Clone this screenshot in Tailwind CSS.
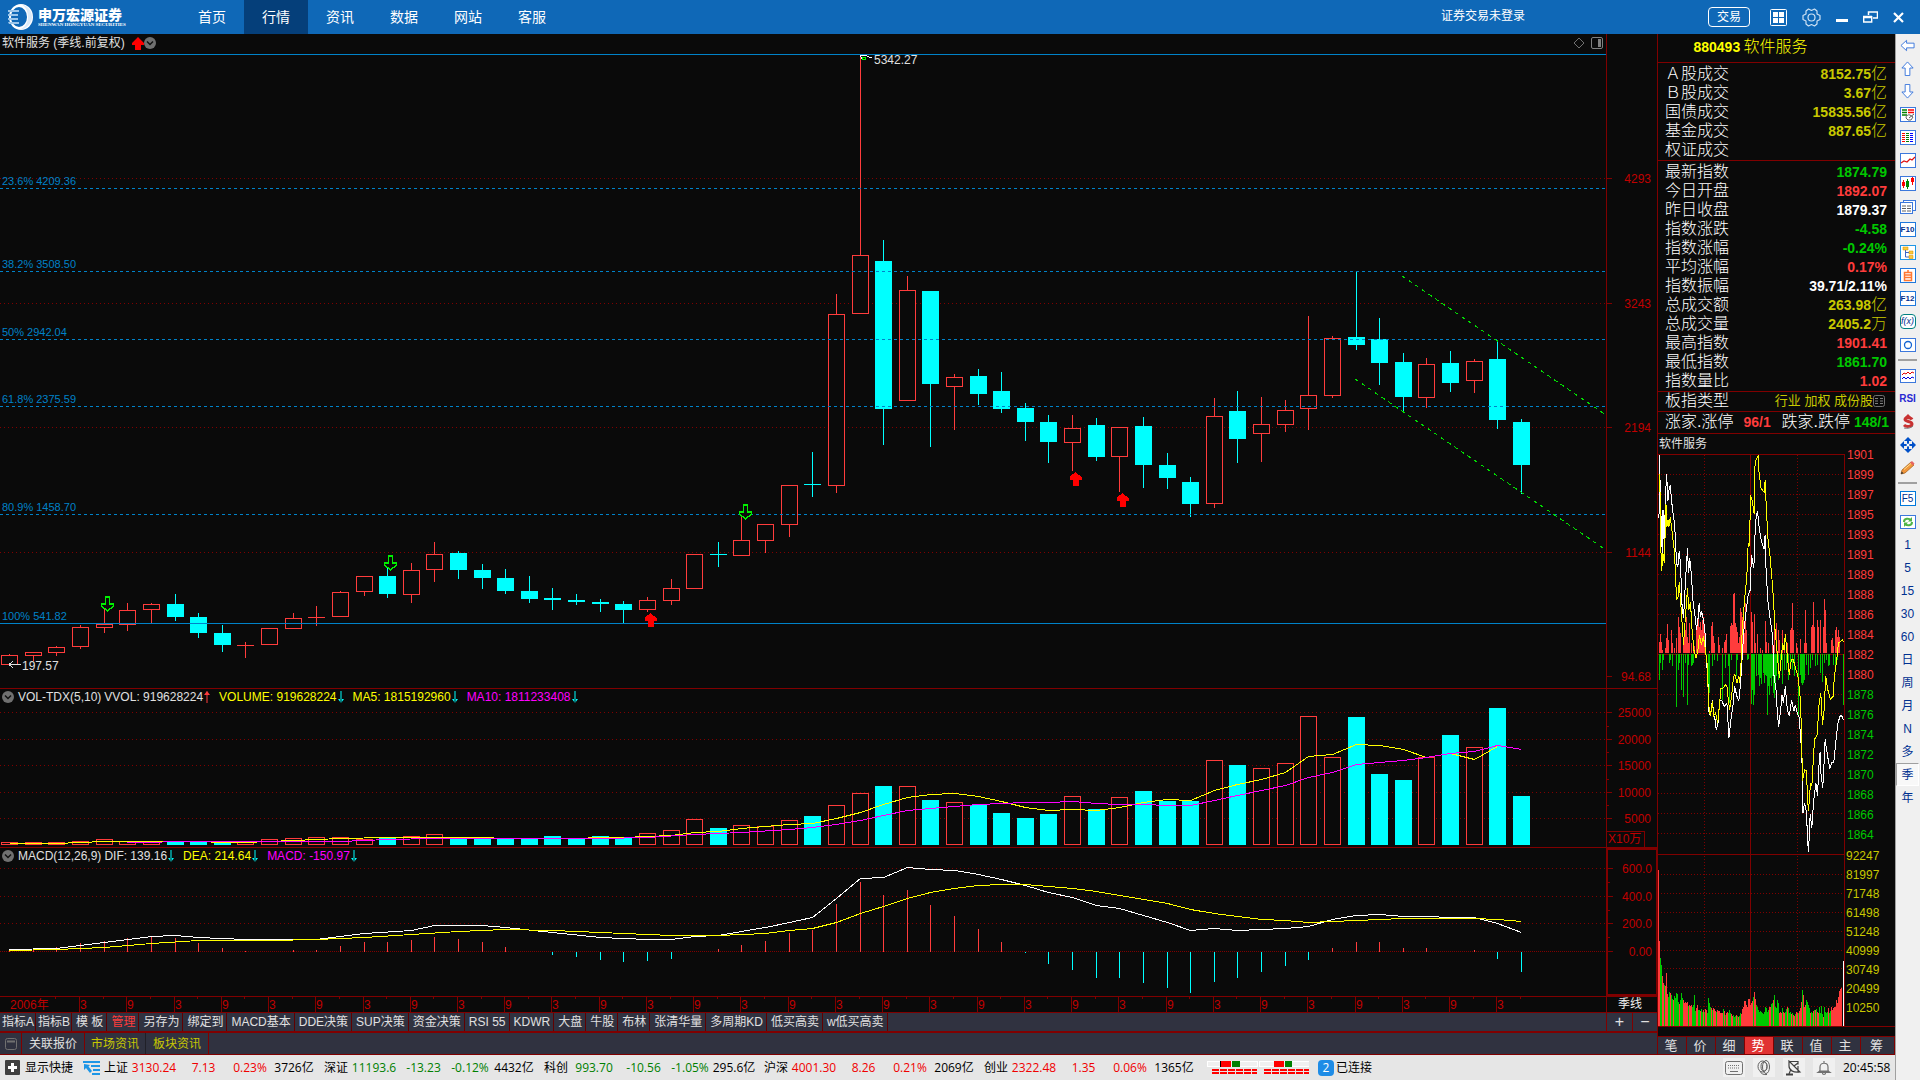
<!DOCTYPE html>
<html lang="zh-CN">
<head>
<meta charset="UTF-8">
<meta name="viewport" content="width=device-width, initial-scale=1.0">
<title>软件服务 880493</title>
<script src="https://cdn.jsdelivr.net/npm/@tailwindcss/browser@4"></script>
</head>
<body class="h-screen overflow-hidden flex flex-col bg-[#0a0a0a] text-[#e0e0e0] text-xs font-[family-name:'Liberation_Sans','Noto_Sans_CJK_SC',sans-serif]">

<!-- Title bar -->
<header class="h-[34px] shrink-0 flex items-center bg-[#0f68b7] text-white">
    <div class="w-[180px] flex items-center pl-2 gap-1">
        <svg class="w-[26px] h-7" viewBox="0 0 26 28">
            <ellipse cx="13" cy="14" rx="12" ry="13" fill="#fff"/>
            <ellipse cx="11" cy="14" rx="8" ry="10" fill="#0f68b7"/>
            <path d="M0 7h11v2H0zM0 11h10v2H0zM0 15h10v2H0zM0 19h11v2H1z" fill="#9cc6ea"/>
            <path d="M13 1c8 2 11 8 11 13S20 26 11 27c7-3 9-8 9-13S18 4 13 1z" fill="#dcebf8"/>
        </svg>
        <svg class="w-[92px] h-6" viewBox="0 0 92 24" role="img" aria-label="申万宏源证券">
            <text x="0" y="15" font-size="14" font-weight="900" fill="#fff">申万宏源证券</text>
            <text x="0" y="21" font-size="5" font-weight="700" font-family="Liberation Serif, serif" fill="#fff">SHENWAN HONGYUAN SECURITIES</text>
        </svg>
    </div>
    <nav class="flex h-full text-sm">
        <button class="w-16">首页</button>
        <button class="w-16 bg-[#053f7a]">行情</button>
        <button class="w-16">资讯</button>
        <button class="w-16">数据</button>
        <button class="w-16">网站</button>
        <button class="w-16">客服</button>
    </nav>
    <span class="ml-auto mr-[183px] pb-0.5">证券交易未登录</span>
    <div class="flex items-center gap-[15px] pr-4">
        <button class="w-[42px] h-5 mr-[5px] rounded border border-white leading-4">交易</button>
        <button aria-label="布局"><svg class="w-[17px] h-[17px]" viewBox="0 0 17 17"><rect x=".5" y=".5" width="16" height="16" rx="1" fill="none" stroke="#fff"/><path d="M3 3h5v5H3zM9 3h5v5H9zM3 9h5v5H3zM9 9h5v5H9z" fill="#fff"/></svg></button>
        <button aria-label="设置"><svg class="w-[19px] h-[19px]" viewBox="0 0 19 19" fill="none" stroke="#cfe2f4" stroke-width="1.2"><path d="M6.500 1 9.500 2.500 12.500 1l2.500 2v3l3 1.500v4L15 13v3l-2.500 2-3-1.500-3 1.500L4 16v-3l-3-1.500v-4L4 6V3z" stroke-linejoin="round"/><circle cx="9.500" cy="9.500" r="3.500"/></svg></button>
        <button aria-label="最小化"><svg class="w-3 h-[17px]" viewBox="0 0 12 17"><path d="M0 10h12v3H0z" fill="#fff"/></svg></button>
        <button aria-label="还原"><svg class="w-[15px] h-3" viewBox="0 0 15 12" fill="none" stroke="#fff"><path d="M5.500 4V1h9v6H10" stroke-width="1.500"/><path d="M0 6h9" stroke-width="2.500"/><path d="M.7 5v6h8V5" stroke-width="1.400"/></svg></button>
        <button aria-label="关闭"><svg class="w-[11px] h-[11px]" viewBox="0 0 11 11"><path d="M1 1l9 9M10 1l-9 9" stroke="#fff" stroke-width="2.200"/></svg></button>
    </div>
</header>

<div class="flex-1 min-h-0 flex">
    <div class="flex-1 min-w-0 flex flex-col">
        <div class="flex-1 min-h-0 flex">

            <!-- Charts -->
            <main class="flex-1 min-w-0 flex flex-col">
                <section class="flex-1 min-h-0 flex border-b border-[#800000]">
                    <div class="flex-1 min-w-0 relative">
                        <svg id="price" class="w-full h-full block"></svg>
                        <div class="absolute inset-x-0 top-0 h-[18px] flex items-center pl-0.5">
                            <h1>软件服务 (季线.前复权)</h1>
                            <svg class="w-3 h-[13px] ml-[7px]" viewBox="0 0 12 13"><path d="M6 0l6 6v2H9v5H3V8H0V6z" fill="#f00"/></svg>
                            <svg class="w-3 h-3" viewBox="0 0 12 12"><circle cx="6" cy="6" r="6" fill="#707070"/><path d="M3 4.500l3 3 3-3" stroke="#111" stroke-width="1.500" fill="none"/></svg>
                            <svg class="w-3 h-3 ml-auto" viewBox="0 0 12 12"><path d="M6 1l5 5-5 5-5-5z" fill="none" stroke="#707070"/></svg>
                            <svg class="w-3 h-3 ml-1.5 mr-[3px]" viewBox="0 0 12 12"><rect x=".5" y=".5" width="11" height="11" rx="1.500" fill="none" stroke="#808080"/><path d="M7 2h3v8H7z" fill="#808080"/></svg>
                        </div>
                    </div>
                    <svg id="priceAxis" class="w-[51px] h-full block border-l border-[#800000]"></svg>
                </section>
                <section class="h-[159px] flex border-b border-[#800000]">
                    <div class="flex-1 min-w-0 relative">
                        <svg id="vol" class="w-full h-full block"></svg>
                        <div class="absolute inset-x-0 top-0 h-4 flex items-center pl-0.5">
                            <svg class="w-3 h-3 mr-1" viewBox="0 0 12 12"><circle cx="6" cy="6" r="6" fill="#707070"/><path d="M3 4.500l3 3 3-3" stroke="#111" stroke-width="1.500" fill="none"/></svg>
                            <span class="mr-[3px]">VOL-TDX(5,10)</span>
                            <span>VVOL: 919628224</span>
                            <svg class="w-2 h-3 mr-2" viewBox="0 0 8 12"><path d="M3.500 0h1v12h-1zM4 0l3 4H1z" fill="#ff3c3c"/></svg>
                            <span class="text-[#ffff00]">VOLUME: 919628224</span>
                            <svg class="w-2 h-3 mr-2" viewBox="0 0 8 12"><path d="M3.500 0h1v12h-1zM4 12l3-4H1z" fill="#0ff"/></svg>
                            <span class="text-[#ffff00]">MA5: 1815192960</span>
                            <svg class="w-2 h-3 mr-2" viewBox="0 0 8 12"><path d="M3.500 0h1v12h-1zM4 12l3-4H1z" fill="#0ff"/></svg>
                            <span class="text-[#ff00ff]">MA10: 1811233408</span>
                            <svg class="w-2 h-3" viewBox="0 0 8 12"><path d="M3.500 0h1v12h-1zM4 12l3-4H1z" fill="#0ff"/></svg>
                        </div>
                    </div>
                    <div class="w-[51px] relative border-l border-[#800000]">
                        <svg id="volAxis" class="w-full h-full block"></svg>
                        <span class="absolute left-0 bottom-0 w-[38px] h-4 leading-[15px] pl-px border-t border-r border-[#800000] text-[#c00000]">X10万</span>
                    </div>
                </section>
                <section class="h-[149px] flex border-b border-[#800000]">
                    <div class="flex-1 min-w-0 relative">
                        <svg id="macd" class="w-full h-full block"></svg>
                        <div class="absolute inset-x-0 top-0 h-4 flex items-center pl-0.5">
                            <svg class="w-3 h-3 mr-1" viewBox="0 0 12 12"><circle cx="6" cy="6" r="6" fill="#707070"/><path d="M3 4.500l3 3 3-3" stroke="#111" stroke-width="1.500" fill="none"/></svg>
                            <span class="mr-[3px]">MACD(12,26,9)</span>
                            <span>DIF: 139.16</span>
                            <svg class="w-2 h-3 mr-2" viewBox="0 0 8 12"><path d="M3.500 0h1v12h-1zM4 12l3-4H1z" fill="#0ff"/></svg>
                            <span class="text-[#ffff00]">DEA: 214.64</span>
                            <svg class="w-2 h-3 mr-2" viewBox="0 0 8 12"><path d="M3.500 0h1v12h-1zM4 12l3-4H1z" fill="#0ff"/></svg>
                            <span class="text-[#ff00ff]">MACD: -150.97</span>
                            <svg class="w-2 h-3" viewBox="0 0 8 12"><path d="M3.500 0h1v12h-1zM4 12l3-4H1z" fill="#0ff"/></svg>
                        </div>
                    </div>
                    <svg id="macdAxis" class="w-[51px] h-full block border-2 border-r border-[#800000]"></svg>
                </section>
                <div class="h-4 flex border-b border-[#800000]">
                    <svg id="time" class="flex-1 min-w-0 h-full block"></svg>
                    <div class="w-[51px] pr-1 border-l border-[#800000] text-center leading-[15px] text-[#f0f0f0]">季线</div>
                </div>
                <div class="h-5 flex border-b-2 border-[#800000] bg-[#303240] leading-[17px] whitespace-nowrap">
                    <div id="indicators" class="flex-1 flex"></div>
                    <button class="w-[26px] border-l border-[#800000] text-base leading-4">+</button>
                    <button class="w-[25px] border-l border-[#800000] text-base leading-4">−</button>
                </div>
                <div class="h-[22px] flex border-b border-[#800000] bg-[#303240] leading-5">
                    <button class="w-[22px] flex items-center justify-center border-r border-[#800000]" aria-label="展开"><svg class="w-3 h-3" viewBox="0 0 12 12"><rect x=".5" y=".5" width="11" height="11" rx="2" fill="none" stroke="#707070"/><path d="M2 2.500h8v2H2z" fill="#707070"/></svg></button>
                    <button class="px-[7px] border-r border-[#800000]">关联报价</button>
                    <button class="px-1.5 border-r border-[#202028] text-[#c8c800]">市场资讯</button>
                    <button class="px-[7px] border-r border-[#800000] text-[#c8c800]">板块资讯</button>
                </div>
            </main>

            <!-- Quote panel -->
            <aside class="w-[238px] shrink-0 flex flex-col border-l border-[#800000]">
                <h2 class="h-[29px] shrink-0 border-b border-[#800000] text-center leading-7 text-[#ffff00] pr-14 pl-1"><b class="text-sm font-bold">880493</b> <span class="text-base font-light">软件服务</span></h2>
                <dl id="turnover" class="shrink-0 pt-px pb-px pl-[7px] pr-2 border-b border-[#800000]"></dl>
                <dl id="index" class="shrink-0 pt-px pb-px pl-[7px] pr-2 border-b border-[#800000]"></dl>
                <div class="h-5 shrink-0 flex items-center pl-[7px] pr-[10px] pb-0.5 border-b border-[#800000]">
                    <span class="text-base font-light leading-[18px] flex-1 text-white">板指类型</span>
                    <a href="#" class="text-[13px] text-[#c8c800]">行业 加权 成份股</a>
                    <svg class="w-3 h-3" viewBox="0 0 12 12"><rect x=".5" y=".5" width="11" height="11" rx="2" fill="none" stroke="#707070"/><path d="M2 3.500h3M7 3.500h3M2 6h3M7 6h3M2 8.500h3M7 8.500h3" stroke="#808080"/></svg>
                </div>
                <div class="h-[22px] shrink-0 flex items-center pl-[7px] pr-1.5 pb-0.5 border-b border-[#800000] text-base font-light leading-5 text-white">
                    <span>涨家.涨停</span><b class="ml-[10px] text-sm font-bold text-[#ff3c3c]">96/1</b>
                    <span class="ml-auto mr-1">跌家.跌停</span><b class="text-sm font-bold text-[#00c800]">148/1</b>
                </div>
                <div class="h-5 shrink-0 pl-px leading-5">软件服务</div>
                <div class="flex-1 min-h-0 flex border-b border-[#800000]">
                    <div class="w-[187px] shrink-0 flex flex-col border-t border-r border-[#800000]">
                        <svg id="tick" class="w-full flex-[402] min-h-0 block" viewBox="54 74 561 1205" preserveAspectRatio="none"></svg>
                        <svg id="tickVol" class="w-full flex-[171] min-h-0 block" viewBox="174 106 561 513" preserveAspectRatio="none"></svg>
                    </div>
                    <svg id="tickAxis" class="flex-1 min-w-0 h-full block overflow-visible"></svg>
                </div>
                <div class="h-[28px] shrink-0 pt-[9px]">
                    <div id="tabs" class="h-[19px] flex border-y border-[#800000] bg-[#303240] text-[13px] leading-[17px]"></div>
                </div>
            </aside>
        </div>

        <!-- Status bar -->
        <footer class="h-[25px] shrink-0 flex items-center bg-[#e6e6e6] text-black whitespace-nowrap font-[family-name:'Open_Sans','Noto_Sans_CJK_SC',sans-serif]">
            <button class="flex items-center gap-[5px] pl-[5px]">
                <svg class="w-[15px] h-[15px]" viewBox="0 0 15 15"><rect width="15" height="15" rx="1" fill="#404040"/><path d="M6 3h3v3h3v3H9v3H6V9H3V6h3z" fill="#fff"/></svg>
                显示快捷
            </button>
            <svg class="w-[17px] h-[14px] ml-[10px] mr-1" viewBox="0 0 17 14"><path d="M0 0h17v2H0zM8 4h9v2H8zM10 8h7v2h-7zM9 12h8v2H9zM1 3l6 1-1.500 1.500L9 10l-2 2-4-5-2 2z" fill="#1e96e6"/></svg>
            <div id="quotes" class="flex"></div>
            <svg class="w-[102px] h-[15px] ml-[3px]" viewBox="0 0 102 15" shape-rendering="crispEdges">
                <path d="M0 1h50v5H0zM52 1h50v5H52z" fill="#f0f0f0" stroke="#fff"/>
                <path d="M14 1h10v6H14zM67 1h10v6H67z" fill="#f00"/><path d="M25 1h8v6h-8zM78 1h7v6h-7z" fill="#008000"/><path d="M13 1h1v6h-1z" fill="#000"/>
                <path d="M5 10h45M57 10h45M5 13h45M57 13h45" stroke="#f00" stroke-width="2" stroke-dasharray="7 1"/>
            </svg>
            <span class="w-4 h-4 ml-[9px] mr-0.5 rounded-sm bg-[#1e8ce6] text-white text-center leading-4">2</span>已连接
            <div class="ml-auto flex items-center gap-2 pr-[3px]">
                <button class="w-[22px] h-[19px] flex items-center justify-center bg-[#f0f0f0]" aria-label="键盘"><svg class="w-[18px] h-[14px]" viewBox="0 0 18 14" fill="none" stroke="#707070"><rect x=".5" y=".5" width="17" height="13" rx="2"/><path d="M3 4.500h12M3 7h12" stroke-dasharray="1 1"/><path d="M5 10.500h8"/></svg></button>
                <button class="w-[22px] h-[19px] flex items-center justify-center bg-[#f0f0f0]" aria-label="耳机"><svg class="w-4 h-4" viewBox="0 0 16 16" fill="none" stroke="#606060"><ellipse cx="6.500" cy="6.500" rx="4.500" ry="5.500"/><ellipse cx="8" cy="6.500" rx="3" ry="4.500"/><ellipse cx="10" cy="7" rx="3.500" ry="6.500"/><path d="M4 11c1 3 4 4 7 3.500"/></svg></button>
                <button class="w-[22px] h-[19px] flex items-center justify-center bg-[#f0f0f0]" aria-label="卫星"><svg class="w-4 h-4" viewBox="0 0 16 16" fill="none" stroke="#404040" stroke-width="1.200"><path d="M3 1v5c0 4 4 7 11 6L3 1zM4 1.500h8v3M8 6l4-3M12 12V6M5 9l-2 5"/><path d="M0 14.500h7" stroke-width="2"/></svg></button>
                <button class="w-[22px] h-[19px] flex items-center justify-center bg-[#f0f0f0]" aria-label="提醒"><svg class="w-4 h-4" viewBox="0 0 16 16" fill="none" stroke="#707070" stroke-width="1.200"><path d="M8 1v2M4 11V7c0-5 8-5 8 0v4l2 1.500H2zM6.500 13c0 2 3 2 3 0"/><path d="M3 11.500h10" stroke-width="2"/></svg></button>
                <time class="w-[49px]">20:45:58</time>
            </div>
        </footer>
    </div>

    <!-- Tool strip -->
    <nav class="w-[25px] shrink-0 flex flex-col items-stretch bg-[#f0f0f0] border-l border-[#a0a0a0] text-[#003090] pr-px pb-2" id="tools">
        <button class="h-[23px] grid place-items-center" aria-label="后退"><svg width="15" height="15" viewBox="0 0 16 16" fill="#fff" stroke="#3c78dc"><path d="M1 8l6-5.500V5.500h8v5H7v3z"/></svg></button>
        <button class="h-[23px] grid place-items-center" aria-label="上"><svg width="15" height="15" viewBox="0 0 16 16" fill="#fff" stroke="#3c78dc"><path d="M8 1L2 7.500h3.500v8h5v-8H14z"/></svg></button>
        <button class="h-[23px] grid place-items-center" aria-label="下"><svg width="15" height="15" viewBox="0 0 16 16" fill="#fff" stroke="#3c78dc"><path d="M8 15L2 8.500h3.500v-8h5v8H14z"/></svg></button>
        <button class="h-[23px] grid place-items-center"><svg width="16" height="16" viewBox="0 0 16 16" fill="none"><rect x=".5" y=".5" width="15" height="14" fill="#fff" stroke="#3c78dc"/><path d="M2 3h5M2 5.500h5M2 8h5" stroke="#008000" stroke-width="1.500"/><path d="M8 3h6M8 5.500h6" stroke="#f00" stroke-width="1.500"/><path d="M6 11a3 3 0 0 1 4-3l3 2-2 3H8zM9 11l5-4" stroke="#606060"/></svg></button>
        <button class="h-[23px] grid place-items-center"><svg width="16" height="16" viewBox="0 0 16 16" fill="none" shape-rendering="crispEdges"><rect x=".5" y=".5" width="15" height="14" fill="#fff" stroke="#3c78dc"/><path d="M3.500 3v10" stroke="#f00" stroke-width="3" stroke-dasharray="1 1"/><path d="M7.500 3v10" stroke="#008000" stroke-width="3" stroke-dasharray="1 1"/><path d="M11.500 3v10" stroke="#00f" stroke-width="3" stroke-dasharray="1 1"/></svg></button>
        <button class="h-[23px] grid place-items-center"><svg width="16" height="16" viewBox="0 0 16 16" fill="none"><rect x=".5" y=".5" width="15" height="14" fill="#fff" stroke="#3c78dc"/><path d="M1 10l3-2 3 1 3-3 2 1 3-3" stroke="#e01010" stroke-width="1.200"/></svg></button>
        <button class="h-[23px] grid place-items-center"><svg width="16" height="16" viewBox="0 0 16 16" fill="none"><rect x=".5" y=".5" width="15" height="14" fill="#fff" stroke="#3c78dc"/><path d="M2 6h3v4H2zM3 4h1v8H3zM11 2h3v4h-3zM12 1h1v8h-1z" fill="#f00"/><path d="M6 5h3v6H6zM7 3h1v10H7z" fill="#080"/></svg></button>
        <button class="h-[23px] grid place-items-center"><svg width="16" height="14" viewBox="0 0 16 14"><rect x="3.500" y=".5" width="12" height="10" fill="#fff" stroke="#3c78dc"/><rect x=".5" y="2.500" width="12" height="11" fill="#fff" stroke="#3c78dc"/><path d="M2 6h4M7 6h4M2 8.500h4M7 8.500h4M2 11h4M7 11h4" stroke="#606060"/></svg></button>
        <button class="h-[23px] grid place-items-center"><span class="w-4 h-[15px] bg-white border border-[#1e78dc] text-[8px] font-bold leading-[13px]">F10</span></button>
        <button class="h-[23px] grid place-items-center"><svg width="16" height="16" viewBox="0 0 16 16"><rect x=".5" y=".5" width="15" height="14" fill="#fff" stroke="#1e96e6"/><path d="M5.500 5v7H10M5.500 7.500H10" stroke="#3c64c8" fill="none"/><path d="M3 2h5v3H3zM9 6h4v3H9zM9 10.500h4v3H9z" fill="#ffc83c" stroke="#c89000" stroke-width=".5"/></svg></button>
        <button class="h-[23px] grid place-items-center"><svg width="16" height="16" viewBox="0 0 16 16"><rect x=".5" y=".5" width="15" height="14" fill="#fff" stroke="#1e78dc"/><path d="M8 2v2M4.500 4.500h7v8h-7zM4.500 7h7M4.500 9.500h7" stroke="#ff7832" stroke-width="1.500" fill="none"/></svg></button>
        <button class="h-[23px] grid place-items-center"><span class="w-4 h-[15px] bg-white border border-[#1e78dc] text-[8px] font-bold leading-[13px]">F12</span></button>
        <button class="h-[23px] grid place-items-center"><span class="w-4 h-[15px] rounded-sm bg-white border border-[#008080] text-[9px] leading-[13px] italic">f(x)</span></button>
        <button class="h-[23px] grid place-items-center"><svg width="16" height="14" viewBox="0 0 16 14"><rect x=".5" y=".5" width="15" height="13" fill="#fff" stroke="#3c78dc"/><circle cx="8" cy="7" r="3.500" fill="none" stroke="#1464d2" stroke-width="1.300"/></svg></button>
        <hr class="my-[3px] mx-0.5 border-t-2 border-[#a0a0a0]">
        <button class="h-[23px] grid place-items-center"><svg width="16" height="14" viewBox="0 0 16 14" fill="none"><rect x=".5" y=".5" width="15" height="13" fill="#fff" stroke="#3c78dc"/><path d="M2 6l2-2 2 1 2-2 2 2 2-2 2 1" stroke="#e00000"/><path d="M2 10l2-2 2 2 2-2 2 2 2-2 2 1" stroke="#0000e0"/></svg></button>
        <button class="h-[23px] text-[10px] font-bold text-[#2828d2]">RSI</button>
        <button class="h-[23px] grid place-items-center"><svg width="12" height="15" viewBox="0 0 12 15" fill="none"><path d="M10 5.500C9 3.500 3 3 3 5.500S10 7 10 10s-6 3-8 1" stroke="#c83232" stroke-width="3"/><path d="M6 0l3 3H3z" fill="#c83232"/><path d="M2 14c3 1 7 0 9-2" stroke="#808080"/></svg></button>
        <button class="h-[23px] grid place-items-center"><svg width="16" height="16" viewBox="0 0 16 16"><path d="M8 0l4 4H4zM8 16l4-4H4zM0 8l4-4v8zM16 8l-4-4v8zM7 4h2v8H7zM4 7h8v2H4z" fill="#0050c8"/><circle cx="8" cy="8" r="1.500" fill="#fff"/></svg></button>
        <button class="h-[23px] grid place-items-center"><svg width="15" height="15" viewBox="0 0 15 15"><path d="M1 14l1-4 9-8 3 3-9 8z" fill="#f0963c" stroke="#a05a14" stroke-width=".7"/><path d="M10 2.500L12 1l2.500 2.500L13 5.500z" fill="#e66464"/><path d="M1 14l.7-2.500 1.800 1.800z" fill="#303030"/><path d="M4 9.500l7-6" stroke="#ffe08c"/></svg></button>
        <hr class="my-[3px] mx-0.5 border-t-2 border-[#a0a0a0]">
        <button class="h-[23px] grid place-items-center"><span class="w-4 h-[15px] bg-white border border-[#0078dc] text-[10px] leading-[13px]">F5</span></button>
        <button class="h-[23px] grid place-items-center"><svg width="16" height="14" viewBox="0 0 16 14" fill="none"><rect x=".5" y=".5" width="15" height="13" fill="#fff" stroke="#3c78dc"/><path d="M4 7c0-4 5-4 7-2M12 7c0 4-5 4-7 2" stroke="#50b446" stroke-width="2"/><path d="M12 2v4.500H8zM4 12V7.500h4z" fill="#50b446"/></svg></button>
    </nav>
</div>

<script>
var NS = 'http://www.w3.org/2000/svg';
var DARK = '#800000', RED = '#ff3c3c', CYAN = '#00ffff', BLUE = '#0082c8';

function el(parent, tag, attrs, text) {
    var n = document.createElementNS(NS, tag);
    for (var k in attrs) n.setAttribute(k, attrs[k]);
    if (text !== undefined) n.textContent = text;
    parent.appendChild(n);
    return n;
}
// group whose y axis is counted from the top of the window
function layer(id, top) {
    return el(document.getElementById(id), 'g', { transform: 'translate(0,' + -top + ')', 'shape-rendering': 'crispEdges' });
}
function hline(g, y, color, dash) {
    el(g, 'line', { x1: 0, x2: '100%', y1: y + 0.5, y2: y + 0.5, stroke: color, 'stroke-dasharray': dash || 'none' });
}
function vline(g, x, y1, y2, color) {
    el(g, 'rect', { x: x, y: Math.min(y1, y2), width: 1, height: Math.max(1, Math.abs(y2 - y1)), fill: color });
}
function cx(i) { return Math.floor(9.7 + 23.62 * i); }
function bar(g, i, top, bottom, up) {
    if (bottom - top < 2) {
        el(g, 'rect', { x: cx(i) - 8, y: top, width: 17, height: Math.max(1, bottom - top), fill: up ? RED : CYAN });
    } else if (up) {
        el(g, 'rect', { x: cx(i) - 7.5, y: top + 0.5, width: 16, height: bottom - top, fill: '#0a0a0a', stroke: RED });
    } else {
        el(g, 'rect', { x: cx(i) - 8, y: top, width: 17, height: bottom - top, fill: CYAN });
    }
}
function curve(g, pts, color) {
    el(g, 'polyline', { points: pts.map(function(p) { return (cx(p[0]) + 0.5) + ',' + (p[1] + 0.5); }).join(' '), fill: 'none', stroke: color, 'stroke-width': 1 });
}

// up flag, high, body top, body bottom, low
var candles = [
    [1,654,655,664,664],[1,652,652,655,660],[1,646,647,652,655],[1,625,627,646,648],[1,608,624,627,632],
    [1,603,610,624,630],[1,603,604,609,623],[0,594,604,617,620],[0,613,617,633,637],[0,625,633,645,651],
    [1,642,645,645,657],[1,628,628,644,644],[1,613,618,628,628],[1,606,617,618,625],[1,591,592,616,616],
    [1,576,576,591,595],[0,568,576,594,597],[1,563,570,594,602],[1,542,554,569,581],[0,551,553,570,578],
    [0,564,570,578,588],[0,569,578,591,593],[0,576,591,599,602],[0,588,598,600,609],[0,594,600,602,604],
    [0,599,602,604,611],[0,601,604,610,623],[1,597,600,609,611],[1,579,588,600,604],[1,554,554,588,588],
    [0,542,554,554,566],[1,515,540,555,555],[1,524,524,540,552],[1,485,485,524,536],[0,452,484,484,496],
    [1,294,314,485,492],[1,56,255,313,313],[0,240,261,409,444],[1,276,290,400,400],[0,291,291,384,446],
    [1,374,377,386,429],[0,369,376,394,404],[0,372,391,409,412],[0,403,408,422,440],[0,415,422,442,462],
    [1,415,428,442,470],[0,418,425,457,460],[1,427,427,456,491],[0,417,426,465,487],[0,453,465,478,488],
    [0,477,482,504,516],[1,398,416,503,507],[0,391,411,439,462],[1,397,424,433,461],[1,400,410,424,431],
    [1,316,395,408,429],[1,336,338,395,397],[0,272,337,345,349],[0,318,339,363,384],[0,353,362,397,411],
    [1,358,364,397,407],[0,351,363,383,391],[1,359,361,380,392],[0,340,359,420,428],[0,419,422,465,493]
];

function drawPrice() {
    var g = layer('price', 34);
    [178, 303, 427, 552].forEach(function(y) { hline(g, y, DARK, '1 3'); });
    candles.forEach(function(c, i) {
        vline(g, cx(i), c[1], c[4] + 1, c[0] ? RED : CYAN);
        bar(g, i, c[2], c[3], c[0]);
    });
    [54, 623].forEach(function(y) { hline(g, y, BLUE); });
    [188, 271, 339, 406, 514].forEach(function(y) { hline(g, y, BLUE, '3 3'); });
    [[185,'23.6% 4209.36'],[268,'38.2% 3508.50'],[336,'50% 2942.04'],[403,'61.8% 2375.59'],[511,'80.9% 1458.70'],[620,'100% 541.82']].forEach(function(t) {
        el(g, 'text', { x: 2, y: t[0], 'font-size': 11, fill: BLUE }, t[1]);
    });
    [[1402, 276, 1606, 415], [1355, 379, 1606, 550]].forEach(function(l) {
        el(g, 'line', { x1: l[0], y1: l[1], x2: l[2], y2: l[3], stroke: '#00e000', 'stroke-dasharray': '4 4' });
    });
    [[107,604],[390,563],[745,512]].forEach(function(p) {
        el(g, 'path', { d: 'M-2 -7h4v7h4v2l-6 5l-6 -5v-2h4z', transform: 'translate(' + (p[0] + 0.5) + ',' + p[1] + ')', fill: '#0a0a0a', stroke: '#00f000', 'stroke-width': 1.4 });
    });
    [[650,620],[1075,479],[1122,500]].forEach(function(p) {
        el(g, 'path', { d: 'M0 -7l6 5v3h-3v6h-6v-6h-3v-3z', transform: 'translate(' + (p[0] + 0.5) + ',' + p[1] + ')', fill: '#f00' });
    });
    el(g, 'path', { d: 'M860 55h4l8 3M860 55l2 4', stroke: '#fff', fill: 'none' });
    el(g, 'path', { d: 'M862 57h3v2h-3z', stroke: '#0f0', fill: 'none' });
    el(g, 'text', { x: 874, y: 64, 'font-size': 12, fill: '#e0e0e0' }, '5342.27');
    el(g, 'path', { d: 'M9 664.5h12M9 664.5l4 -3M9 664.5l4 3', stroke: '#e0e0e0', fill: 'none' });
    el(g, 'text', { x: 22, y: 670, 'font-size': 12, fill: '#e0e0e0' }, '197.57');
}

function drawAxis(id, top, labels, minor) {
    var g = layer(id, top);
    labels.forEach(function(l) {
        el(g, 'rect', { x: 0, y: l[0], width: 5, height: 1, fill: DARK });
        el(g, 'text', { x: 44, y: l[0] + 5, 'font-size': 12, 'text-anchor': 'end', fill: '#c00000' }, l[1]);
    });
    minor.forEach(function(y) { el(g, 'rect', { x: 0, y: y, width: 2, height: 1, fill: DARK }); });
}

var volTops = [842,842,842,841,839,841,842,842,841,842,842,839,838,837,837,839,838,836,834,839,839,838,839,836,838,836,838,833,830,819,828,825,826,820,816,805,793,786,786,800,802,805,813,818,814,796,809,797,791,801,801,760,765,768,763,716,757,717,774,780,757,735,747,708,796];
var ma5 = [[0,843],[2,843],[4,841],[8,841],[9,842],[10,842],[12,840],[14,838],[16,837],[20,837],[21,838],[23,838],[26,837],[28,835],[29,832],[30,831],[31,828],[32,826],[33,824],[34,823],[35,818],[36,812],[37,804],[38,797],[39,794],[40,793],[41,796],[42,801],[43,807],[44,810],[45,809],[46,810],[47,807],[48,802],[49,799],[50,800],[51,790],[52,784],[53,779],[54,772],[55,756],[56,754],[57,744],[58,745],[59,749],[60,757],[61,753],[62,759],[63,746]];
var ma10 = [[5,842],[8,841],[14,841],[16,839],[18,838],[25,838],[27,837],[29,834],[31,832],[33,829],[34,827],[35,824],[36,820],[37,815],[38,810],[39,808],[40,806],[41,804],[42,803],[43,802],[44,802],[45,801],[46,803],[47,804],[48,804],[49,805],[50,805],[51,800],[52,795],[53,790],[54,785],[55,777],[56,772],[57,764],[58,762],[59,760],[60,757],[61,753],[62,751],[63,745],[64,749]];

function drawVolume() {
    var g = layer('vol', 689);
    [712, 739, 765, 792, 818].forEach(function(y) { hline(g, y, DARK, '1 3'); });
    volTops.forEach(function(t, i) { bar(g, i, t, candles[i][0] ? 844 : 845, candles[i][0]); });
    curve(g, ma5, '#ffff00');
    curve(g, ma10, '#ff00ff');
}

var dif = [[0,949],[2,948],[4,942],[6,936],[7,935],[8,937],[10,939],[13,939],[14,936],[15,933],[17,930],[18,925],[20,925],[21,927],[23,932],[25,937],[27,939],[28,939],[29,936],[30,935],[31,931],[32,927],[33,922],[34,917],[35,898],[36,878],[37,877],[38,867],[39,869],[40,870],[41,874],[42,879],[43,885],[44,892],[45,897],[46,905],[47,908],[48,915],[49,922],[50,930],[51,928],[52,930],[53,929],[54,928],[55,926],[56,919],[57,915],[58,914],[59,916],[60,916],[61,917],[62,917],[63,923],[64,932]];
var dea = [[0,950],[2,949],[4,947],[6,943],[8,940],[11,940],[13,939],[15,937],[17,934],[19,931],[21,929],[23,930],[25,932],[28,935],[30,935],[32,933],[33,930],[34,928],[35,922],[36,913],[37,906],[38,898],[39,892],[40,888],[41,885],[42,884],[43,884],[44,886],[45,888],[46,891],[47,895],[48,899],[49,903],[50,909],[51,913],[52,916],[53,919],[54,920],[55,922],[56,921],[57,920],[58,919],[59,918],[62,918],[63,919],[64,921]];
// end of each histogram bar, starting at the zero line
var hist = [951,948,947,943,941,938,937,938,943,948,951,952,950,950,946,942,942,940,937,939,942,947,952,955,957,960,962,961,959,952,949,945,941,933,930,904,882,895,890,905,916,929,942,953,964,970,978,978,983,988,993,982,978,972,966,960,948,942,942,948,948,952,950,959,972];

function drawMacd() {
    var g = layer('macd', 848);
    [868, 896, 923].forEach(function(y) { hline(g, y, DARK, '1 3'); });
    hline(g, 951, DARK, '1 1');
    hist.forEach(function(y, i) { if (y !== 952) vline(g, cx(i), 952, y, y < 952 ? RED : CYAN); });
    curve(g, dif, '#ffffff');
    curve(g, dea, '#ffff00');
}

function drawTime() {
    var g = layer('time', 997);
    for (var i = 2; i < 65; i++) {
        var major = i > 2 && i % 2 === 1;
        vline(g, cx(i) - 1, 997, major ? 1012 : 999, DARK);
        if (major) el(g, 'text', { x: cx(i), y: 1009, 'font-size': 12, fill: '#c00000' }, i % 4 === 3 ? '3' : '9');
    }
    el(g, 'text', { x: 10, y: 1009, 'font-size': 12, fill: '#c00000' }, '2006年');
}

// intraday lines, three units to the pixel
var tickWhite = '57,265 58,73 61,180 64,290 67,375 69,238 73,350 76,215 80,130 84,212 88,172 91,168 94,200 98,240 104,280 110,400 114,410 118,362 122,402 126,520 131,565 136,470 140,400 143,355 146,430 150,385 155,440 160,520 166,560 170,600 174,575 178,520 182,560 186,547 192,575 197,620 199,680 204,740 208,850 212,860 218,812 222,855 226,870 230,902 235,880 240,815 246,812 254,830 262,822 268,925 274,870 280,830 285,770 292,800 298,813 303,760 308,680 313,600 318,560 325,500 332,480 336,375 343,415 348,275 354,242 360,300 366,335 374,357 377,315 380,420 386,520 394,580 400,620 404,740 410,780 414,850 418,893 424,840 428,797 432,820 438,770 444,840 450,860 457,810 464,845 468,827 474,850 480,865 484,920 488,980 491,1152 496,1120 502,1150 505,1230 508,1268 513,1155 518,1195 523,1120 530,1060 535,1100 540,1000 543,968 546,1040 551,1075 555,1000 558,930 564,970 572,1018 578,1000 584,1000 590,940 596,885 602,862 606,857 610,862 614,872';
var tickYellow = '57,130 60,180 62,340 65,422 69,370 73,400 78,220 81,290 84,270 87,290 91,262 96,300 104,370 110,510 115,500 118,457 124,540 131,645 136,570 143,475 147,540 152,515 156,590 162,660 169,685 175,655 179,615 185,645 191,620 197,660 202,700 207,825 212,860 218,815 222,858 228,850 234,880 240,820 244,775 250,775 258,765 262,770 266,810 270,840 276,800 282,740 286,735 292,760 297,740 300,760 304,710 308,600 315,510 322,440 326,340 330,345 333,195 338,210 344,250 346,110 350,88 356,76 359,130 365,175 375,187 377,150 381,240 386,330 392,380 398,450 403,520 406,590 411,640 416,700 420,745 426,680 430,640 434,660 438,612 444,680 450,735 456,690 462,690 470,720 476,740 482,790 486,880 490,1055 496,1020 502,1025 505,1110 508,1145 514,1060 518,1070 522,1000 526,930 534,915 540,820 545,790 550,885 555,840 560,740 566,780 574,808 582,800 586,740 592,700 598,640 604,635 610,630 614,637';
var buys = '58,637 61,612 64,635 67,660 76,655 79,625 82,583 85,630 94,600 97,640 103,655 110,625 116,562 119,590 122,610 131,637 134,580 137,600 140,560 143,622 146,640 149,580 155,640 161,637 164,650 170,600 173,575 176,550 179,590 182,575 185,600 188,570 191,560 194,600 197,650 209,665 215,588 218,575 221,618 224,640 236,620 239,645 248,655 254,638 257,630 260,612 272,588 275,580 278,585 281,493 284,490 287,580 290,590 293,605 296,640 299,620 302,535 305,545 308,560 311,570 314,610 317,520 320,600 335,545 338,575 344,553 347,640 353,612 362,655 368,660 377,572 380,635 386,640 398,620 404,560 410,578 416,600 419,630 428,600 434,645 443,640 452,600 455,595 458,518 461,600 470,640 473,655 482,628 494,640 497,540 500,640 515,590 518,585 521,512 524,515 527,590 536,570 539,590 545,570 554,590 557,507 560,540 563,640 578,630 581,625 584,650 590,600 593,592 596,620 599,600 602,620';
var sells = '58,752 61,700 67,720 70,690 88,700 91,690 98,710 110,832 116,720 119,700 125,782 131,802 137,700 143,827 146,705 155,710 158,705 161,700 200,700 206,848 209,790 218,710 224,690 233,695 248,812 257,715 266,710 270,820 276,690 290,740 293,690 323,690 326,688 335,822 338,780 341,825 344,795 350,740 356,735 359,770 362,745 365,762 371,730 374,760 377,735 380,740 383,857 386,770 389,795 392,745 395,770 398,740 401,790 404,805 407,760 410,740 418,750 424,725 430,762 436,720 440,720 446,750 452,715 458,720 464,740 478,862 482,735 485,760 488,765 491,760 494,750 500,705 506,735 512,715 518,690 530,710 536,705 545,730 551,758 557,700 563,690 569,710 572,707 584,705 590,705 596,690 614,827';
var minuteVol = 'r148 r363 g413 g434 r468 r487 g494 r497 r458 r520 g530 g516 r518 g525 g535 r538 g528 g532 g519 g521 g545 r553 g540 g519 g532 r540 r548 r545 r548 r545 g558 r555 r558 r555 g560 g555 g525 g573 r565 r555 g570 g570 r573 g568 g575 r570 g575 r568 r570 g578 g534 g550 g560 r565 g570 r565 r567 r572 g575 r570 r572 r572 r578 r578 r580 g568 r572 g585 r580 r575 g578 g570 g578 r582 r588 g585 g590 g588 r585 g588 r592 g588 g580 r582 r568 r560 r542 r542 r555 r560 r535 r537 r555 r387 r550 r543 g530 r515 r535 g555 g560 g570 g575 g573 g575 g578 g582 g575 g562 g565 g575 g570 r560 r562 g553 g550 r540 g525 g560 g565 g540 g550 r578 r575 r578 g565 r575 r580 g575 g568 r562 g565 g580 g575 r582 g578 r585 r588 g583 r575 r578 g580 r572 r565 r545 g510 r525 r560 r555 g540 g545 g555 g565 r578 g575 g580 r573 g570 r570 g568 r575 r580 g562 g580 g558 g583 r590 g562 g575 g580 g575 r563 g580 g573 r560 r570 r565 r560 r562 r540 r548 r530 r512 r505 r502';

function seg(g, x1, y1, x2, y2, color, dash) {
    el(g, 'line', { x1: x1, y1: y1, x2: x2, y2: y2, stroke: color, 'vector-effect': 'non-scaling-stroke', 'stroke-dasharray': dash || 'none' });
}
function drawTick() {
    var g = el(document.getElementById('tick'), 'g', { 'shape-rendering': 'crispEdges' });
    for (var i = 1; i < 20; i++) seg(g, 54, 73 + i * 60, 615, 73 + i * 60, DARK, i === 10 ? '' : '1 2');
    [194, 476].forEach(function(x) { seg(g, x, 74, x, 1279, DARK, '1 2'); });
    seg(g, 332, 74, 332, 1279, DARK);
    seg(g, 54, 1277, 615, 1277, DARK);
    buys.split(' ').forEach(function(p) { p = p.split(','); el(g, 'rect', { x: p[0] - 1, y: p[1], width: 3, height: 670 - p[1], fill: RED }); });
    sells.split(' ').forEach(function(p) { p = p.split(','); el(g, 'rect', { x: p[0] - 1, y: 673, width: 3, height: p[1] - 673, fill: '#00c800' }); });
    [[tickWhite, '#ffffff'], [tickYellow, '#ffff00']].forEach(function(l) {
        el(g, 'polyline', { points: l[0], fill: 'none', stroke: l[1], 'vector-effect': 'non-scaling-stroke' });
    });

    g = el(document.getElementById('tickVol'), 'g', { 'shape-rendering': 'crispEdges' });
    for (i = 0; i < 8; i++) seg(g, 174, 161 + i * 57, 735, 161 + i * 57, DARK, '1 2');
    [314, 596].forEach(function(x) { seg(g, x, 106, x, 619, DARK, '1 2'); });
    seg(g, 452, 106, 452, 619, DARK);
    minuteVol.split(' ').forEach(function(v, i) {
        var y = +v.slice(1);
        el(g, 'rect', { x: 174 + i * 3, y: y, width: 3, height: 619 - y, fill: v[0] === 'r' ? RED : '#00c800' });
    });
    seg(g, 733, 423, 733, 619, '#ffffff');

    g = layer('tickAxis', 453);
    [1901,1899,1897,1895,1893,1891,1889,1888,1886,1884,1882,1880,1878,1876,1874,1872,1870,1868,1866,1864].forEach(function(v, i) {
        el(g, 'text', { x: 2, y: 458 + i * 20, 'font-size': 12, fill: v >= 1880 ? RED : '#00c800' }, v);
    });
    [92247,81997,71748,61498,51248,40999,30749,20499,10250].forEach(function(v, i) {
        el(g, 'text', { x: 1, y: 859 + i * 19, 'font-size': 12, fill: '#c8c800' }, v);
    });
}

function rows(id, list) {
    document.getElementById(id).innerHTML = list.map(function(r) {
        return '<div class="h-[19px] flex items-center justify-between text-base leading-[18px] font-light"><dt class="text-white">' + r[0] + '</dt>' +
            '<dd class="' + r[2] + '"><b class="text-sm font-bold">' + r[1] + '</b>' + (r[3] || '') + '</dd></div>';
    }).join('');
}
var Y = 'text-[#c8c800]', R = 'text-[#ff3c3c]', G = 'text-[#00c800]', W = 'text-white';
rows('turnover', [['Ａ股成交','8152.75',Y,'亿'],['Ｂ股成交','3.67',Y,'亿'],['国债成交','15835.56',Y,'亿'],['基金成交','887.65',Y,'亿'],['权证成交','',Y]]);
rows('index', [['最新指数','1874.79',G],['今日开盘','1892.07',R],['昨日收盘','1879.37',W],['指数涨跌','-4.58',G],['指数涨幅','-0.24%',G],['平均涨幅','0.17%',R],['指数振幅','39.71/2.11%',W],['总成交额','263.98',Y,'亿'],['总成交量','2405.2',Y,'万'],['最高指数','1901.41',R],['最低指数','1861.70',G],['指数量比','1.02',R]]);

document.getElementById('indicators').innerHTML = ['指标A','指标B','模 板','管理','另存为','绑定到','MACD基本','DDE决策','SUP决策','资金决策','RSI 55','KDWR','大盘','牛股','布林','张清华量','多周期KD','低买高卖','w低买高卖'].map(function(t, i) {
    return '<button class="' + (i < 2 ? 'pl-0.5 pr-px' : 'pl-1 pr-[3px]') + ' border-r border-[#600000]' + (t === '管理' ? ' text-[#ff3c3c]' : '') + '">' + t + '</button>';
}).join('');

document.getElementById('tabs').innerHTML = ['笔','价','细','势','联','值','主','筹'].map(function(t) {
    return '<button class="pr-0.5 border-r border-[#800000] ' + (t === '筹' ? 'flex-1' : 'w-[29px]') + (t === '势' ? ' bg-[#e13232] text-white' : '') + '">' + t + '</button>';
}).join('');

var UP = 'text-[#f00000]', DOWN = 'text-[#008000]';
document.getElementById('quotes').innerHTML = [['上证','3130.24','7.13','0.23%','3726亿',UP],['深证','11193.6','-13.23','-0.12%','4432亿',DOWN],['科创','993.70','-10.56','-1.05%','295.6亿',DOWN],['沪深','4001.30','8.26','0.21%','2069亿',UP],['创业','2322.48','1.35','0.06%','1365亿',UP]].map(function(q) {
    return '<div class="w-[220px] flex text-center"><span class="w-[27px] text-left">' + q[0] + '</span>' +
        '<span class="w-[46px] ' + q[5] + '">' + q[1] + '</span><span class="w-[53px] ' + q[5] + '">' + q[2] + '</span>' +
        '<span class="w-[40px] ' + q[5] + '">' + q[3] + '</span><span class="w-[48px]">' + q[4] + '</span></div>';
}).join('');

['1','5','15','30','60','日','周','月','N','多','季','年'].forEach(function(t) {
    var b = document.createElement('button');
    b.className = t === '季' ? 'h-[23px] border border-[#a0a0a0] border-r-white border-b-white bg-[#f8f8f8]' : 'h-[23px]';
    b.textContent = t;
    document.getElementById('tools').appendChild(b);
});

drawPrice();
drawAxis('priceAxis', 34, [[178,'4293'],[303,'3243'],[427,'2194'],[552,'1144'],[676,'94.68']], []);
drawVolume();
drawAxis('volAxis', 689, [[712,'25000'],[739,'20000'],[765,'15000'],[792,'10000'],[818,'5000']], [726,752,779,805]);
drawMacd();
drawAxis('macdAxis', 850, [[868,'600.0'],[896,'400.0'],[923,'200.0'],[951,'0.00']], [882,910,937]);
drawTime();
drawTick();
</script>
</body>
</html>
